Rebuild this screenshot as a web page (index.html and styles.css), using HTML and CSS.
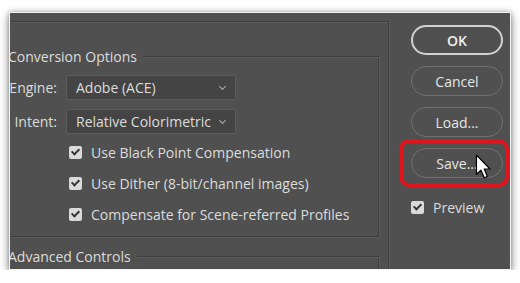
FILE: index.html
```html
<!DOCTYPE html>
<html lang="en">
<head>
    <meta charset="UTF-8">
    <title>Color Settings</title>
    <link rel="stylesheet" href="styles.css">
</head>
<body>
    <div class="dialog">
        <!-- Left part: the option groups (cropped on the left) -->
        <div class="options">
            <div class="group">
                <div class="group-title"><span>Conversion Options</span></div>
                <div class="group-body">
                    <div class="field">
                        <label class="field-label">Engine:</label>
                        <div class="select"><span>Adobe (ACE)</span><span class="chevron"></span></div>
                    </div>
                    <div class="field">
                        <label class="field-label">Intent:</label>
                        <div class="select"><span>Relative Colorimetric</span><span class="chevron"></span></div>
                    </div>
                    <div class="checks">
                        <div class="check"><span class="box"></span>Use Black Point Compensation</div>
                        <div class="check"><span class="box"></span>Use Dither (8-bit/channel images)</div>
                        <div class="check"><span class="box"></span>Compensate for Scene-referred Profiles</div>
                    </div>
                </div>
            </div>
            <div class="group group-last">
                <div class="group-title"><span>Advanced Controls</span></div>
                <div class="group-body"></div>
            </div>
        </div>

        <!-- Right part: the buttons -->
        <div class="actions">
            <button class="button button-default">OK</button>
            <button class="button">Cancel</button>
            <button class="button">Load...</button>
            <button class="button">Save...</button>
            <div class="check preview"><span class="box"></span>Preview</div>
        </div>

        <!-- Red highlight and mouse pointer over the Save button -->
        <div class="highlight"></div>
        <svg class="pointer" width="16" height="25" viewBox="0 0 13 21">
            <path d="M1 1 L1 17 L4.8 13.6 L7.6 20 L10.2 18.9 L7.5 12.6 L12.4 12.6 Z" fill="#fff" stroke="#000" stroke-width="1" stroke-linejoin="round"/>
        </svg>
    </div>
</body>
</html>
```

FILE: styles.css
```css
body {
    margin: 0;
    background-color: #fff;
    font-family: 'Open Sans', 'Noto Sans', sans-serif;
    font-size: 14px;
    color: #dcdcdc;
}

.dialog {
    position: relative;
    display: flex;
    width: 500px;
    height: 256px;
    margin: 12px 0 0 9px;
    background-color: #505050;
    border: 1px solid #f4f4f4;
    overflow: hidden;
    box-shadow: 0 3px 9px rgba(0, 0, 0, 0.45), 0 0 4px rgba(0, 0, 0, 0.25);
}

/* Left side */
.options {
    flex: none;
    width: 371px;
    margin: 8px 0 0 -20px;
    padding: 0 9px 0 18px;
    border-top: 1px solid #3e3e3e;
    border-right: 1px solid #3e3e3e;
    box-shadow: inset 0 1px 0 #5c5c5c, 1px 0 0 #5c5c5c;
}

.group {
    margin-top: 26px;
}

.group-last {
    margin-top: 11px;
}

.group-title {
    display: flex;
    align-items: center;
    height: 18px;
    line-height: 18px;
}

    .group-title::after {
        content: '';
        flex: 1;
        margin-left: 6px;
        border-top: 1px solid #3e3e3e;
        border-bottom: 1px solid #5a5a5a;
    }

.group-body {
    margin-top: -9px;
    padding: 18px 0 12px 0;
    border: 1px solid #3e3e3e;
    border-top: none;
    box-shadow: 1px 1px 0 #5a5a5a;
}

.group-last .group-body {
    height: 40px;
}

.field {
    display: flex;
    align-items: center;
    margin-bottom: 9px;
}

.field-label {
    width: 48px;
    margin-right: 9px;
    text-align: right;
}

.select {
    display: flex;
    align-items: center;
    justify-content: space-between;
    box-sizing: border-box;
    width: 170px;
    height: 25px;
    padding: 0 9px;
    background-color: #444;
    border: 1px solid #5c5c5c;
    border-radius: 2px;
}

.chevron {
    width: 4px;
    height: 4px;
    margin: 0 1px 3px 0;
    border-right: 1px solid #b0b0b0;
    border-bottom: 1px solid #b0b0b0;
    transform: rotate(45deg);
}

.checks {
    display: flex;
    flex-direction: column;
    gap: 11px;
    margin-top: -1px;
    padding-left: 60px;
}

.check {
    display: flex;
    align-items: center;
    height: 20px;
}

.box {
    position: relative;
    width: 13px;
    height: 13px;
    margin-right: 9px;
    background-color: #dadada;
    border-radius: 2px;
}

    .box::after {
        content: '';
        position: absolute;
        left: 4px;
        top: 1.5px;
        width: 3px;
        height: 6px;
        border-right: 2px solid #333;
        border-bottom: 2px solid #333;
        transform: rotate(45deg);
    }

/* Right side */
.actions {
    display: flex;
    flex-direction: column;
    padding: 12px 0 0 22px;
}

.button {
    width: 92px;
    height: 30px;
    margin-bottom: 11px;
    padding: 0;
    font-family: inherit;
    font-size: 14px;
    color: #e4e4e4;
    background-color: #505050;
    border: 1.5px solid #707070;
    border-radius: 15px;
}

.button-default {
    border: 2px solid #d2d2d2;
    font-weight: 600;
    color: #f0f0f0;
}

.preview {
    margin-top: 8px;
}

.highlight {
    position: absolute;
    left: 389px;
    top: 126px;
    width: 102px;
    height: 40px;
    border: 4px solid #e0141c;
    border-radius: 10px;
}

.pointer {
    position: absolute;
    left: 465px;
    top: 141px;
}
```
